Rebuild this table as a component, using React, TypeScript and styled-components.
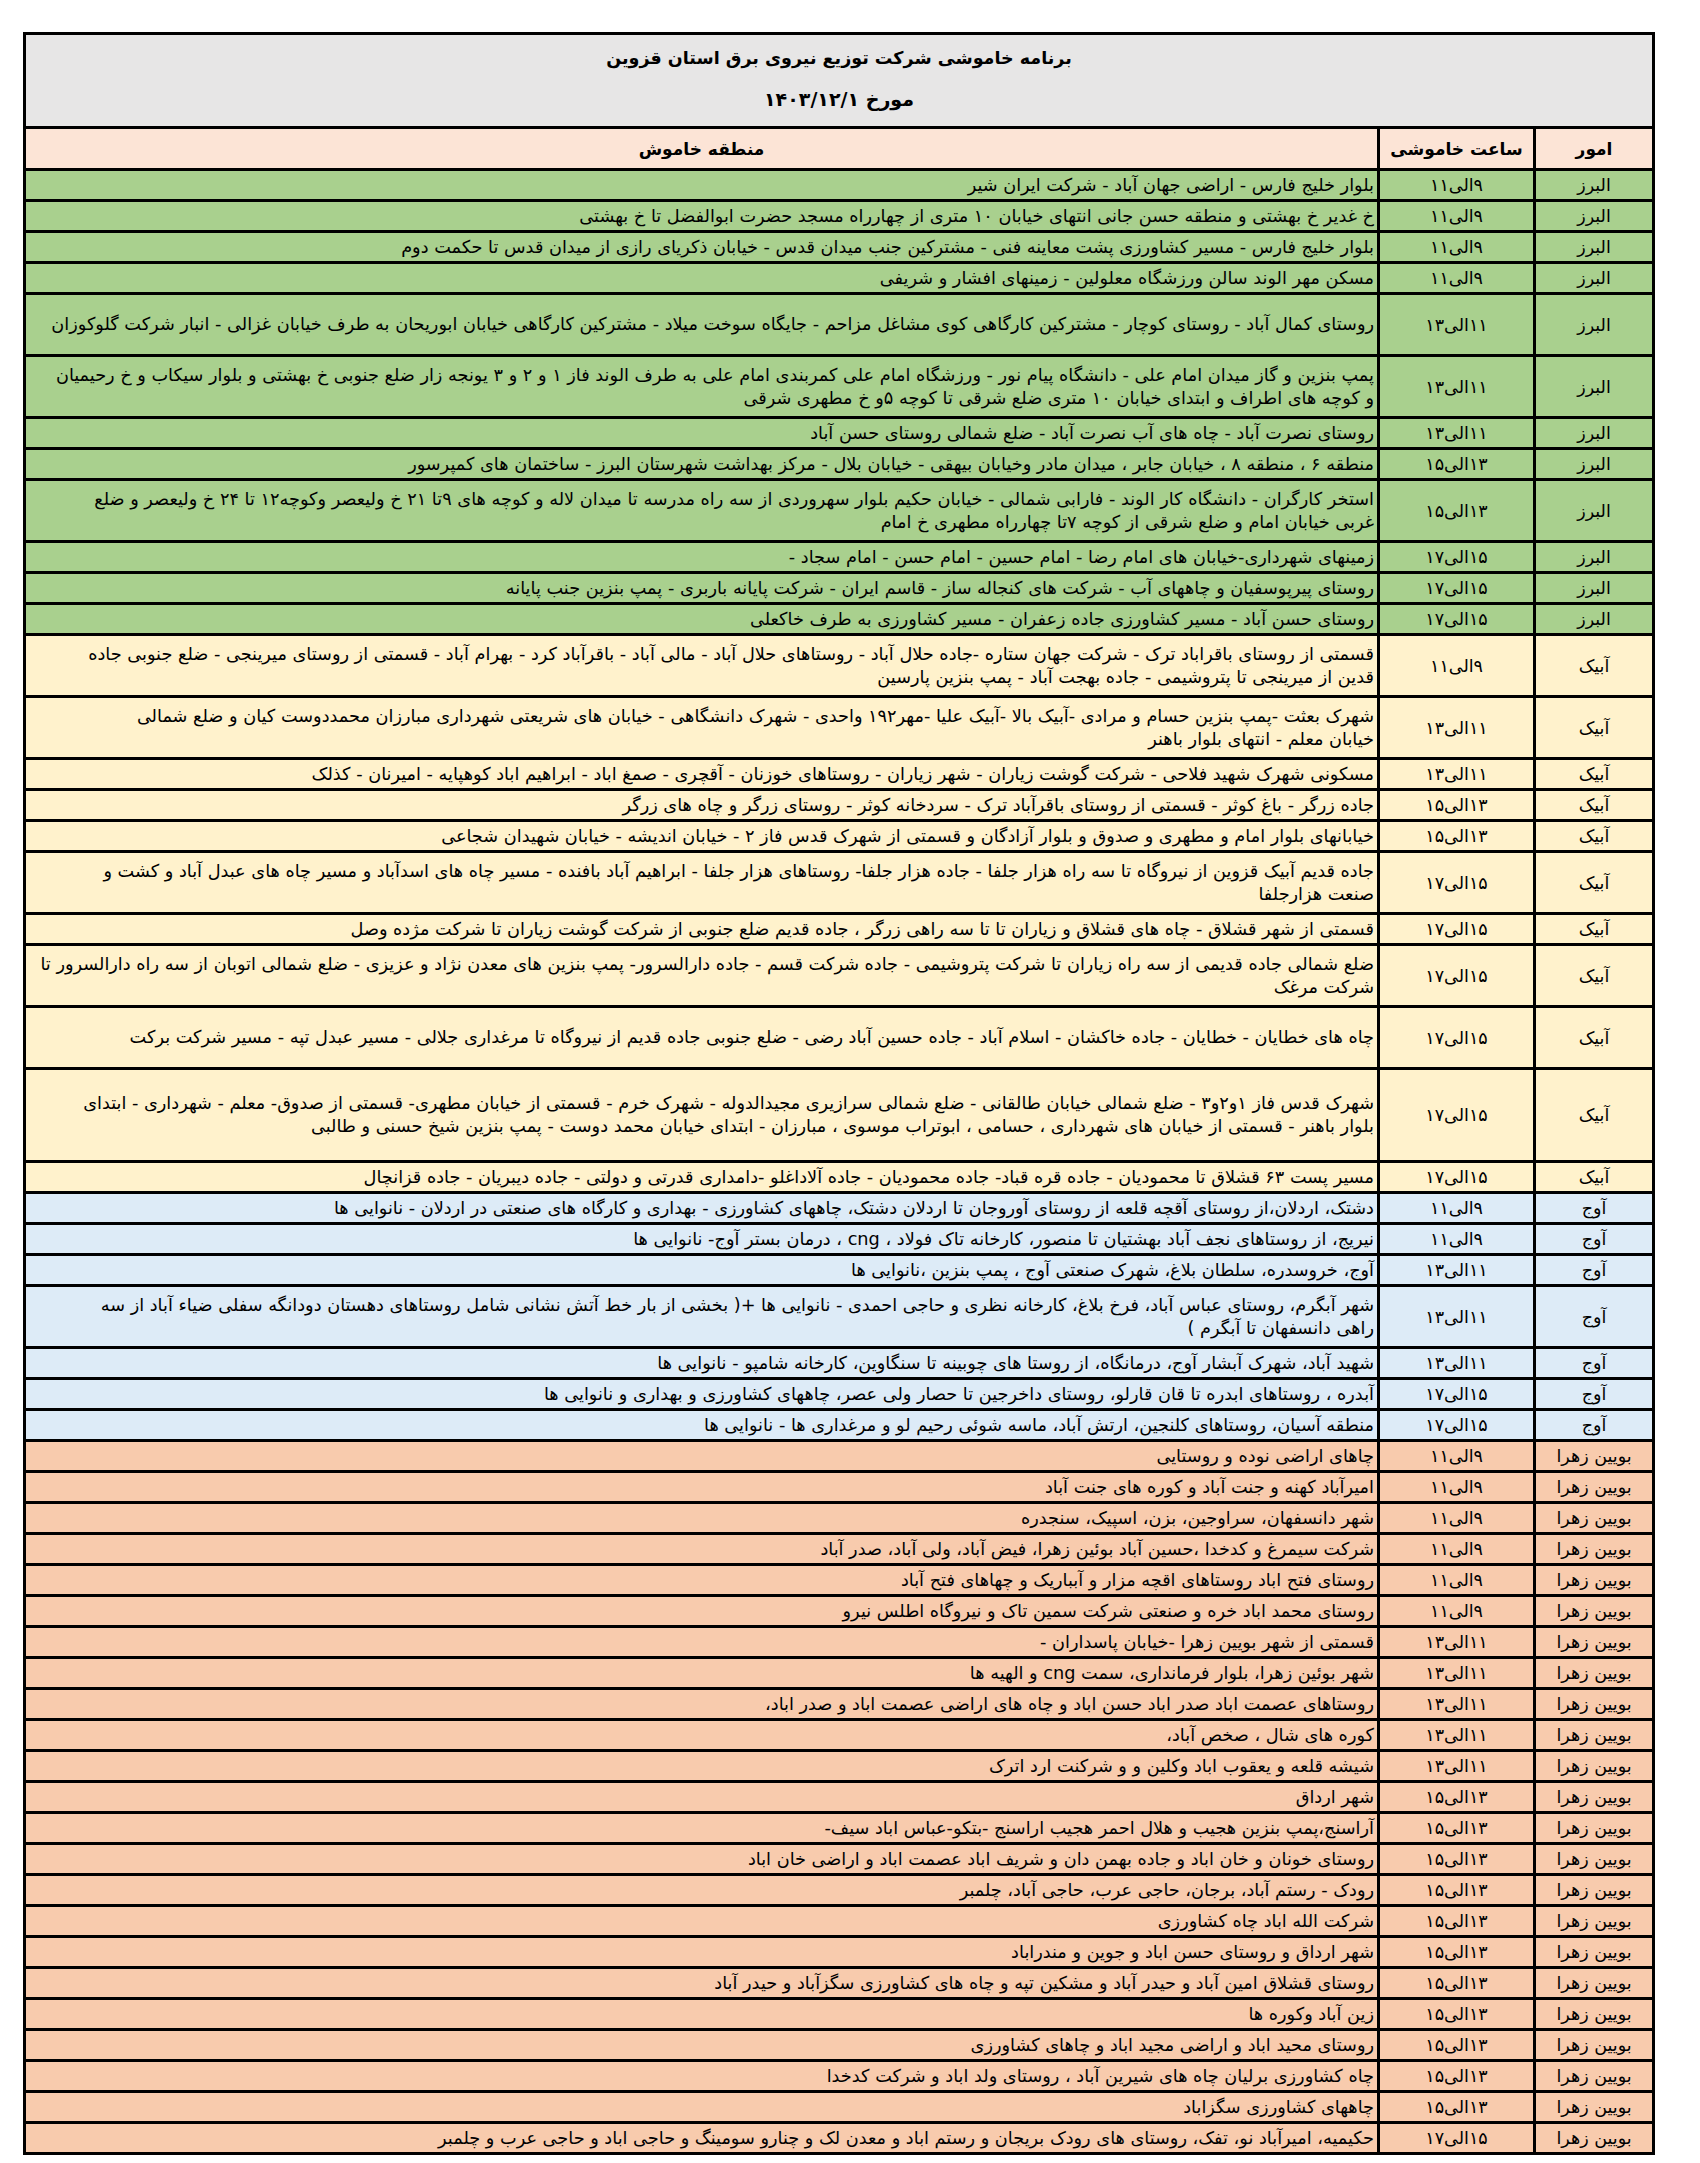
import React from 'react'
import styled, { createGlobalStyle } from 'styled-components'

const GlobalStyle = createGlobalStyle`
  html, body {
    margin: 0;
    padding: 0;
    background: #ffffff;
  }
  body {
    font-family: "DejaVu Sans", "Noto Sans", sans-serif;
    color: #000;
  }
  * {
    box-sizing: border-box;
  }
`

const UNIT = 31

const tones: Record<string, string> = {
  alborz: '#a9d08e',
  abyek: '#fff2cc',
  avaj: '#ddebf7',
  boein: '#f8cbad',
}

const Sheet = styled.div`
  direction: rtl;
  width: 1632px;
  margin: 32px 0 0 23px;
  border: 3px solid #000;
`

const TitleBlock = styled.div`
  height: 91px;
  background: #e7e6e6;
  display: flex;
  flex-direction: column;
  align-items: center;
  justify-content: center;
  gap: 19px;
  padding-bottom: 4px;
`

const TitleLine = styled.div<{ $size: number }>`
  font-size: ${({ $size }) => $size}px;
  font-weight: bold;
  line-height: 22px;
  white-space: nowrap;
`

const Row = styled.div<{ $units: number; $tone?: string }>`
  display: grid;
  grid-template-columns: 119px 156px 1fr;
  height: ${({ $units }) => $units * UNIT}px;
  border-top: 3px solid #000;
  background: ${({ $tone }) => ($tone ? tones[$tone] : '#fce4d6')};
`

const HeadRow = styled(Row)`
  height: 42px;
`

const Cell = styled.div`
  display: flex;
  align-items: center;
  justify-content: center;
  border-left: 3px solid #000;
  font-size: 17.5px;
  white-space: nowrap;
`

const HeadCell = styled(Cell)<{ $last?: boolean }>`
  font-size: 17px;
  font-weight: bold;
  ${({ $last }) => ($last ? 'border-left: none;' : '')}
`

const AreaCell = styled.div`
  display: flex;
  flex-direction: column;
  justify-content: center;
  align-items: flex-start;
  padding-right: 3px;
  font-size: 17.7px;
  overflow: hidden;
`

const Line = styled.div`
  white-space: nowrap;
  line-height: 23px;
`

type Item = { tone: string; area: string; time: string; lines: string[]; units: number }

const areas: Record<string, string> = {
  alborz: 'البرز',
  abyek: 'آبیک',
  avaj: 'آوج',
  boein: 'بویین زهرا',
}

const t911 = '۹الی۱۱'
const t1113 = '۱۱الی۱۳'
const t1315 = '۱۳الی۱۵'
const t1517 = '۱۵الی۱۷'

const raw: [string, string, string[], number][] = [
  ['alborz', t911, ['بلوار خلیج فارس - اراضی جهان آباد -  شرکت ایران شیر'], 1],
  ['alborz', t911, [' خ غدیر خ بهشتی و منطقه حسن جانی انتهای خیابان ۱۰ متری از چهارراه مسجد حضرت ابوالفضل تا خ بهشتی'], 1],
  ['alborz', t911, ['بلوار خلیج فارس - مسیر کشاورزی پشت معاینه فنی - مشترکین جنب میدان قدس -  خیابان ذکریای رازی از میدان قدس تا حکمت دوم'], 1],
  ['alborz', t911, ['مسکن مهر الوند سالن ورزشگاه معلولین -  زمینهای افشار و شریفی'], 1],
  ['alborz', t1113, ['روستای کمال آباد - روستای کوچار - مشترکین کارگاهی کوی مشاغل مزاحم - جایگاه سوخت میلاد - مشترکین کارگاهی خیابان ابوریحان به طرف خیابان غزالی - انبار شرکت گلوکوزان'], 2],
  ['alborz', t1113, [
    'پمپ بنزین و گاز میدان امام علی - دانشگاه پیام نور - ورزشگاه امام علی کمربندی امام علی به طرف الوند فاز ۱ و ۲ و ۳ یونجه زار ضلع جنوبی خ بهشتی و بلوار سیکاب و خ رحیمیان',
    'و کوچه های اطراف و ابتدای خیابان ۱۰ متری ضلع شرقی تا کوچه ۵و خ مطهری شرقی',
  ], 2],
  ['alborz', t1113, ['روستای نصرت آباد - چاه های آب نصرت آباد - ضلع شمالی روستای حسن آباد'], 1],
  ['alborz', t1315, ['منطقه ۶ ، منطقه ۸ ، خیابان جابر ، میدان مادر وخیابان بیهقی - خیابان بلال - مرکز بهداشت شهرستان البرز - ساختمان های کمپرسور'], 1],
  ['alborz', t1315, [
    'استخر کارگران - دانشگاه کار الوند - فارابی شمالی -  خیابان حکیم بلوار سهروردی از سه راه مدرسه تا میدان لاله و کوچه های ۹تا ۲۱ خ ولیعصر وکوچه۱۲ تا ۲۴ خ ولیعصر و ضلع',
    'غربی خیابان امام و ضلع شرقی از کوچه ۷تا چهارراه مطهری خ امام',
  ], 2],
  ['alborz', t1517, ['زمینهای شهرداری-خیابان های امام رضا - امام حسین - امام حسن - امام سجاد -'], 1],
  ['alborz', t1517, ['روستای پیرپوسفیان  و چاههای آب - شرکت های کنجاله ساز - قاسم ایران - شرکت پایانه باربری - پمپ بنزین جنب پایانه'], 1],
  ['alborz', t1517, ['روستای حسن آباد -  مسیر کشاورزی جاده زعفران  - مسیر کشاورزی به طرف خاکعلی'], 1],

  ['abyek', t911, [
    'قسمتی از روستای باقراباد ترک - شرکت جهان ستاره -جاده حلال آباد - روستاهای حلال آباد - مالی آباد - باقرآباد کرد - بهرام آباد - قسمتی از روستای میرینجی - ضلع جنوبی جاده',
    'قدین از میرینجی تا پتروشیمی - جاده بهجت آباد - پمپ بنزین پارسین',
  ], 2],
  ['abyek', t1113, [
    'شهرک بعثت -پمپ بنزین حسام و مرادی -آبیک بالا -آبیک علیا -مهر۱۹۲ واحدی - شهرک دانشگاهی  - خیابان های شریعتی شهرداری مبارزان محمددوست کیان و ضلع شمالی',
    'خیابان معلم -  انتهای بلوار باهنر',
  ], 2],
  ['abyek', t1113, ['مسکونی شهرک شهید فلاحی - شرکت گوشت زیاران - شهر زیاران - روستاهای خوزنان - آقچری - صمغ اباد - ابراهیم اباد کوهپایه - امیرنان - کذلک'], 1],
  ['abyek', t1315, ['جاده زرگر - باغ کوثر - قسمتی از روستای باقرآباد ترک - سردخانه کوثر - روستای زرگر و چاه های زرگر'], 1],
  ['abyek', t1315, ['خیابانهای بلوار امام و مطهری و صدوق و بلوار آزادگان و قسمتی از شهرک قدس فاز ۲ - خیابان اندیشه - خیابان شهیدان شجاعی'], 1],
  ['abyek', t1517, [
    'جاده قدیم آبیک قزوین از نیروگاه تا سه راه هزار جلفا - جاده هزار جلفا- روستاهای هزار جلفا - ابراهیم آباد بافنده - مسیر چاه های اسدآباد و مسیر چاه های عبدل آباد و کشت و',
    'صنعت هزارجلفا',
  ], 2],
  ['abyek', t1517, ['قسمتی از شهر قشلاق - چاه های قشلاق و زیاران تا تا سه راهی زرگر ، جاده قدیم ضلع جنوبی از شرکت گوشت زیاران تا شرکت مژده وصل'], 1],
  ['abyek', t1517, [
    'ضلع شمالی جاده قدیمی از سه راه زیاران تا شرکت پتروشیمی - جاده شرکت قسم - جاده دارالسرور- پمپ بنزین های معدن نژاد و عزیزی - ضلع شمالی اتوبان از سه راه دارالسرور تا',
    'شرکت مرغک',
  ], 2],
  ['abyek', t1517, ['چاه های خطایان  - خطایان - جاده خاکشان - اسلام آباد - جاده حسین آباد رضی - ضلع جنوبی جاده قدیم از نیروگاه تا مرغداری جلالی - مسیر عبدل تپه - مسیر شرکت برکت'], 2],
  ['abyek', t1517, [
    'شهرک قدس فاز ۱و۲و۳ - ضلع شمالی خیابان طالقانی - ضلع شمالی سرازیری مجیدالدوله - شهرک خرم - قسمتی از خیابان مطهری- قسمتی از صدوق- معلم - شهرداری - ابتدای',
    'بلوار باهنر - قسمتی از خیابان های شهرداری ، حسامی ، ابوتراب موسوی ، مبارزان - ابتدای خیابان محمد دوست - پمپ بنزین شیخ حسنی و طالبی',
  ], 3],
  ['abyek', t1517, ['مسیر پست ۶۳ قشلاق تا محمودیان - جاده قره قباد- جاده محمودیان - جاده آلاداغلو -دامداری قدرتی و دولتی - جاده دیبریان - جاده قزانچال'], 1],

  ['avaj', t911, ['دشتک، اردلان،از روستای آقچه قلعه از روستای آوروجان تا اردلان دشتک، چاههای کشاورزی - بهداری و کارگاه های صنعتی در اردلان  - نانوایی ها'], 1],
  ['avaj', t911, ['نیریج، از روستاهای نجف آباد بهشتیان تا منصور، کارخانه تاک فولاد ، cng ،  درمان بستر آوج- نانوایی ها'], 1],
  ['avaj', t1113, ['آوج، خروسدره، سلطان بلاغ، شهرک صنعتی آوج ، پمپ بنزین ،نانوایی ها'], 1],
  ['avaj', t1113, [
    'شهر آبگرم، روستای عباس آباد، فرخ بلاغ، کارخانه نظری و حاجی احمدی - نانوایی ها +( بخشی از بار خط  آتش نشانی شامل روستاهای دهستان دودانگه سفلی ضیاء آباد از سه',
    'راهی دانسفهان تا آبگرم )',
  ], 2],
  ['avaj', t1113, ['شهید آباد، شهرک آبشار آوج، درمانگاه، از روستا های چوبینه تا سنگاوین، کارخانه شامپو - نانوایی ها'], 1],
  ['avaj', t1517, ['آبدره ، روستاهای ابدره تا قان قارلو، روستای داخرجین تا حصار ولی عصر، چاههای کشاورزی و بهداری و  نانوایی ها'], 1],
  ['avaj', t1517, ['منطقه آسیان، روستاهای کلنجین، ارتش آباد، ماسه شوئی رحیم لو و مرغداری ها  - نانوایی ها'], 1],

  ['boein', t911, ['چاهای اراضی نوده و روستایی'], 1],
  ['boein', t911, ['امیرآباد کهنه و جنت آباد و کوره های جنت آباد'], 1],
  ['boein', t911, ['شهر دانسفهان، سراوجین، بزن، اسپیک، سنجدره'], 1],
  ['boein', t911, ['شرکت سیمرغ و کدخدا ،حسین آباد بوئین زهرا، فیض آباد، ولی آباد، صدر آباد'], 1],
  ['boein', t911, ['روستای فتح اباد روستاهای اقچه مزار و آبباریک و چهاهای فتح آباد'], 1],
  ['boein', t911, ['روستای محمد اباد خره و صنعتی شرکت سمین تاک و نیروگاه اطلس نیرو'], 1],
  ['boein', t1113, ['قسمتی از شهر بویین زهرا -خیابان پاسداران -'], 1],
  ['boein', t1113, ['شهر بوئین زهرا، بلوار فرمانداری، سمت  cng و الهیه ها'], 1],
  ['boein', t1113, ['روستاهای عصمت اباد صدر اباد حسن اباد و چاه های اراضی عصمت اباد و صدر اباد،'], 1],
  ['boein', t1113, ['کوره های شال ، صخص آباد،'], 1],
  ['boein', t1113, ['شیشه قلعه و یعقوب اباد وکلین و و شرکنت ارد اترک'], 1],
  ['boein', t1315, ['شهر ارداق'], 1],
  ['boein', t1315, ['آراسنج،پمپ بنزین هجیب و هلال احمر هجیب اراسنج -بتکو-عباس اباد سیف-'], 1],
  ['boein', t1315, ['روستای خونان و خان اباد و جاده بهمن دان و شریف اباد عصمت اباد و اراضی خان اباد'], 1],
  ['boein', t1315, ['رودک - رستم آباد، برجان، حاجی عرب، حاجی آباد، چلمبر'], 1],
  ['boein', t1315, ['شرکت الله اباد چاه کشاورزی'], 1],
  ['boein', t1315, ['شهر ارداق و روستای حسن اباد و جوین و مندراباد'], 1],
  ['boein', t1315, ['روستای قشلاق امین آباد و حیدر آباد و مشکین تپه و چاه های کشاورزی سگزآباد و حیدر آباد'], 1],
  ['boein', t1315, ['زین آباد وکوره ها'], 1],
  ['boein', t1315, ['روستای محید اباد و اراضی مجید اباد و چاهای کشاورزی'], 1],
  ['boein', t1315, ['چاه کشاورزی برلیان چاه های شیرین آباد ،  روستای ولد اباد و شرکت کدخدا'], 1],
  ['boein', t1315, ['چاههای کشاورزی سگزاباد'], 1],
  ['boein', t1517, ['حکیمیه، امیرآباد نو، تفک، روستای های رودک بریجان و رستم اباد و معدن لک و چنارو سومینگ و حاجی اباد و حاجی عرب و چلمبر'], 1],
]

const items: Item[] = raw.map(([tone, time, lines, units]) => ({
  tone,
  area: areas[tone],
  time,
  lines,
  units,
}))

const App = () => {
  return (
    <>
      <GlobalStyle />
      <Sheet>
        <TitleBlock>
          <TitleLine $size={17.5}>برنامه خاموشی شرکت توزیع نیروی برق استان قزوین</TitleLine>
          <TitleLine $size={19}>مورخ  ۱۴۰۳/۱۲/۱</TitleLine>
        </TitleBlock>

        <HeadRow $units={1}>
          <HeadCell>امور</HeadCell>
          <HeadCell>ساعت خاموشی</HeadCell>
          <HeadCell $last>منطقه خاموش</HeadCell>
        </HeadRow>

        {items.map((item, i) => (
          <Row key={i} $units={item.units} $tone={item.tone}>
            <Cell>{item.area}</Cell>
            <Cell>{item.time}</Cell>
            <AreaCell>
              {item.lines.map((line, j) => (
                <Line key={j}>{line}</Line>
              ))}
            </AreaCell>
          </Row>
        ))}
      </Sheet>
    </>
  )
}

export default App
